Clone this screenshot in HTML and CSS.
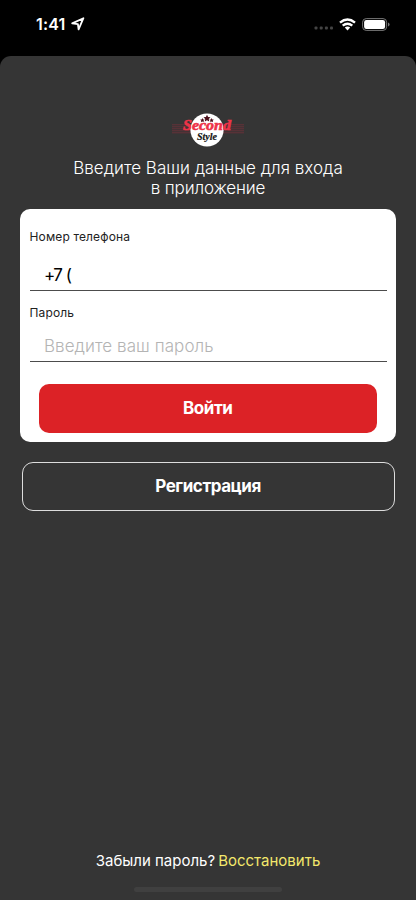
FILE: index.html
```
<!DOCTYPE html>
<html lang="ru">
<head>
<meta charset="utf-8">
<meta name="viewport" content="width=device-width, initial-scale=1">
<title>Second Style</title>
<link rel="stylesheet" href="styles.css">
</head>
<body>
<header class="status">
  <span class="time">1:41</span>
  <svg class="location" width="14" height="14" viewBox="0 0 14 14"><path d="M1.2 6.4 12.4 1.2 7.6 12.4 6.9 7.1Z" fill="none" stroke="#fff" stroke-width="1.8" stroke-linejoin="round"/></svg>
  <svg class="signal" width="20" height="4" viewBox="0 0 20 4" fill="#444"><rect x="0.5" y="0.5" width="3" height="3" rx="1"/><rect x="5.7" y="0.5" width="3" height="3" rx="1"/><rect x="10.9" y="0.5" width="3" height="3" rx="1"/><rect x="16" y="0.5" width="3" height="3" rx="1"/></svg>
  <svg class="wifi" width="17" height="13" viewBox="0 0 17 13"><g fill="none" stroke="#fff" stroke-width="2.4"><path d="M1 4.6Q8.5-1.7 16 4.6"/><path d="M3.7 7.7Q8.5 3.7 13.3 7.7"/></g><path d="M5.8 9.6Q8.5 7.4 11.2 9.6L8.5 12.4Z" fill="#fff"/></svg>
  <svg class="battery" width="28" height="13" viewBox="0 0 28 13"><rect x=".6" y=".6" width="24" height="11.8" rx="3.6" fill="none" stroke="#777" stroke-width="1"/><rect x="2.1" y="2" width="21" height="9" rx="2.3" fill="#fff"/><path d="M26 4.6Q27.6 5 27.6 6.5T26 8.4Z" fill="#777"/></svg>
</header>
<main class="sheet">
  <svg class="logo" width="74" height="36" viewBox="0 0 74 36">
    <path d="M1 12.8H73M1 14.8H73M1 16.8H73M1 18.8H73M1 20.8H73" stroke="#85303b" stroke-width=".9" opacity=".7"/>
    <circle cx="36" cy="18" r="16.6" fill="#fff"/>
    <g fill="#4c101b"><path d="m36 2.8 1.1 2.2 2.4.3-1.7 1.7.4 2.4-2.2-1.1-2.2 1.1.4-2.4-1.7-1.7 2.4-.3z"/><path d="m31.4 6 .7 1.4 1.5.2-1.1 1.1.3 1.5-1.4-.7-1.4.7.3-1.5-1.1-1.1 1.5-.2z"/><path d="m40.6 6 .7 1.4 1.5.2-1.1 1.1.3 1.5-1.4-.7-1.4.7.3-1.5-1.1-1.1 1.5-.2z"/></g>
    <text class="logo-top" x="12" y="18.2" textLength="48" lengthAdjust="spacingAndGlyphs">Second</text>
    <text class="logo-bottom" x="26" y="27.8" textLength="20" lengthAdjust="spacingAndGlyphs">Style</text>
  </svg>
  <h1 class="title"><span>Введите Ваши данные для входа</span><br><span class="title-second">в приложение</span></h1>
  <form class="card">
    <label class="label label-phone" for="phone">Номер телефона</label>
    <div class="field field-phone" id="phone">+7 (</div>
    <label class="label label-password" for="password">Пароль</label>
    <div class="field field-password" id="password">Введите ваш пароль</div>
    <button class="login" type="button"><span>Войти</span></button>
  </form>
  <button class="register" type="button"><span>Регистрация</span></button>
  <footer class="footer"><span class="question">Забыли пароль?</span><a class="restore">Восстановить</a></footer>
  <div class="home"></div>
</main>
</body>
</html>
```
FILE: styles.css
```
* { box-sizing: border-box; }
body { margin: 0; background: #000; font-family: Inter, "Open Sans", sans-serif; color: #fff; }
.status { height: 56px; padding: 0 27px 8px 36px; display: flex; align-items: center; }
.time { font-size: 16px; font-weight: 600; width: 30px; letter-spacing: .2px; white-space: nowrap; }
.location { margin-left: 5px; }
.signal { margin-left: auto; margin-top: 8px; }
.wifi { margin-left: 5px; }
.battery { margin-left: 6px; margin-right: -1px; }
.sheet { height: 844px; background: #353535; border-radius: 11px 11px 0 0; display: flex; flex-direction: column; align-items: center; padding-top: 56px; }
.logo { display: block; flex: none; margin-right: 1px; }
.logo-top { font: italic 700 15px "Liberation Serif", serif; fill: #ee3348; stroke: #ee3348; stroke-width: .6px; }
.logo-bottom { font: italic 700 9.5px "Liberation Serif", serif; fill: #151515; stroke: #151515; stroke-width: .2px; }
.title { margin: 10px 0 0; height: 51px; font-size: 17px; line-height: 20px; font-weight: 300; text-align: center; white-space: nowrap; }
.title-second { letter-spacing: -.15px; }
.card { width: 376px; height: 233px; flex: none; background: #fff; border-radius: 10px; padding: 18px 9.5px 0; display: flex; flex-direction: column; color: #222; }
.label { font-size: 12px; line-height: 18px; height: 18px; letter-spacing: .14px; white-space: nowrap; }
.label-phone { padding-top: 1px; }
.label-password { margin-top: 13px; }
.field { border-bottom: 1px solid #4c4c4c; padding-left: 14.5px; font-size: 17px; font-weight: 300; line-height: 20px; white-space: nowrap; }
.field-phone { height: 46px; padding-top: 20px; color: #000; font-weight: 400; letter-spacing: -1.5px; word-spacing: 1px; }
.field-password { height: 40px; padding-top: 14px; color: #b4b4b4; letter-spacing: .06px; }
button { font: 700 17px Inter, sans-serif; color: #fff; padding: 0; border: 0; flex: none; }
.login { margin: 22px 10px 0 9.5px; height: 49px; padding-bottom: 1px; border-radius: 10px; background: #dc2226; letter-spacing: -.45px; }
.register { margin-top: 20px; width: 373px; height: 49px; padding-bottom: 2px; border: 1px solid #ddd; border-radius: 11px; background: transparent; letter-spacing: -.45px; }
.footer { margin-top: auto; display: flex; gap: 3px; font-size: 15px; line-height: 20px; white-space: nowrap; }
.restore { color: #f3e86c; }
.home { width: 148px; height: 5px; flex: none; margin: 16px 0 8px; border-radius: 3px; background: #404040; }
```
